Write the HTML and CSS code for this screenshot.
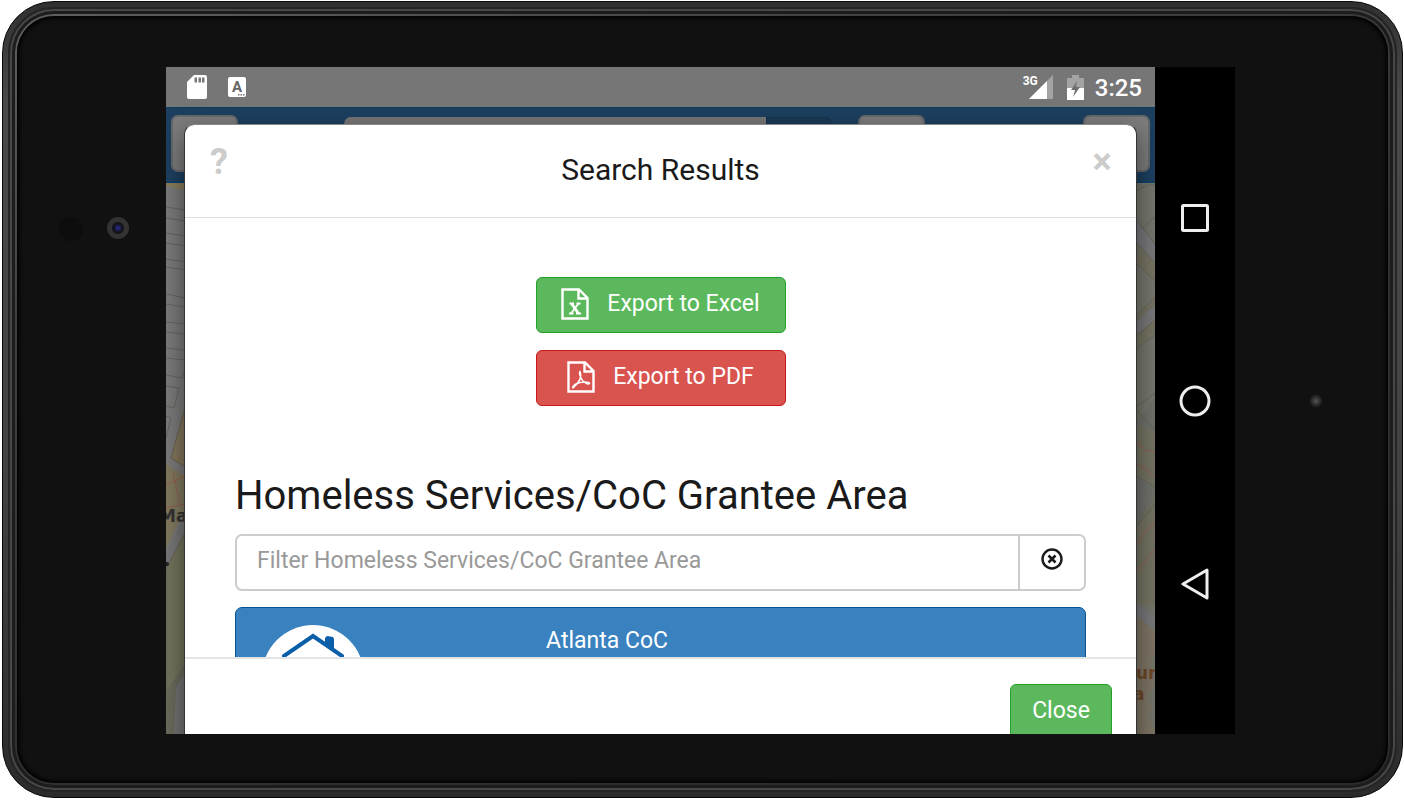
FILE: index.html
```html
<!DOCTYPE html>
<html lang="en">
<head>
  <meta charset="UTF-8" />
  <meta name="viewport" content="width=device-width, initial-scale=1.0"/>
  <title>Search Results</title>

  <link rel="stylesheet" href="styles.css">
</head>
<body>

  <div class="tablet">
    <div class="rim">
      <div class="glass">

        <div class="bezel">
          <span class="sensor"></span>
          <span class="camera"></span>
        </div>

        <div class="screen">
          <main class="app">

            <!-- Status bar -->
            <div class="status-bar">
              <svg class="sd-icon" width="20" height="24" viewBox="0 0 20 24">
                <path d="M7 0H18Q20 0 20 2V22Q20 24 18 24H2Q0 24 0 22V7Z" fill="#fff"/>
                <path d="M7.500 2.500h2.500v5h-2.500zM11.500 2.500h2.500v5h-2.500zM15 2.500h2.500v5h-2.500z" fill="#777"/>
              </svg>
              <svg class="a-icon" width="18" height="20" viewBox="0 0 18 20">
                <rect width="18" height="20" rx="2" fill="#fff"/>
                <text x="9" y="15" text-anchor="middle" class="a-text">A</text>
                <path d="M10 17h1.500v1.500H10zM12.500 17h1.500v1.500h-1.500zM15 17h1.500v1.500H15z" fill="#777"/>
              </svg>
              <span class="network">3G</span>
              <svg class="signal" width="24" height="24" viewBox="0 0 24 24">
                <path d="M24 0V24H0Z" fill="#a3a3a3"/>
                <path d="M18 6V24H0Z" fill="#fff"/>
              </svg>
              <svg class="battery" width="17" height="25" viewBox="0 0 17 25">
                <path d="M5 0h7v3h5v10H0V3h5z" fill="#a3a3a3"/>
                <path d="M0 13h17v12H0z" fill="#fff"/>
                <path d="M10 6L4 15h4l-2 7 7-10H9z" fill="#6f6f6f"/>
              </svg>
              <span class="clock">3:25</span>
            </div>

            <!-- Toolbar behind the dialog -->
            <div class="toolbar">
              <span class="tool"></span>
              <span class="tool-search"></span>
              <span class="tool-go"></span>
              <span class="tool tool-mid"></span>
              <span class="tool tool-last"></span>
            </div>

            <div class="map">
              <svg width="19" height="551" viewBox="0 0 19 551">
                <rect width="19" height="551" fill="#7b7b7b"/>
                <path d="M0 0H19V7L0 3Z" fill="#8b7e5e"/>
                <path d="M0 24l19 3M0 35l19 3M0 50l19 3M0 60l19 3M0 76l19 3M0 84l19 3M0 111l19 4M0 121l19 3M0 139l19 2M0 149l19 2M0 165l19 2M0 175l19 2M0 192l16 3 3-10M0 203l13 2-5 20-8-2M0 233l5 2-5 20" fill="none" stroke="#66665f"/>
                <path d="M19 225L5 275 19 284Z" fill="#84785c" stroke="#686150"/>
                <path d="M0 281L19 293V327L0 365Z" fill="#827a5f"/>
                <path d="M0 302l19-9M0 325l19-4M7 290l7 30" stroke="#93604f" fill="none"/>
                <path d="M0 369L19 332V372L0 405Z" fill="#777"/>
                <path d="M0 386L19 350V482L0 510Z" fill="#75745e" stroke="#66654f"/>
                <path d="M0 511L19 482V551H0Z" fill="#6c6b5c"/>
                <path d="M10 505L19 490V551H8Z" fill="#747474"/>
                <text x="-7" y="339" class="map-label dark">Ma</text>
                <circle cx="1" cy="381" r="2" fill="#222"/>
              </svg>
              <svg width="19" height="551" viewBox="0 0 19 551">
                <rect width="19" height="551" fill="#76776d"/>
                <path d="M0 8L11 2H19" stroke="#66665c" fill="none"/>
                <path d="M0 36L19 61V80L0 59Z" fill="#79787b"/>
                <path d="M0 59L19 80V98L0 80ZM0 133L19 114V122L0 139ZM0 153L19 137V148L0 166Z" fill="#777463"/>
                <path d="M0 139L19 122V137L0 153Z" fill="#79787a"/>
                <path d="M0 228L19 246V332L0 366ZM0 287L19 265V423L0 420Z" fill="#757463"/>
                <path d="M0 240L19 215V249ZM0 294V344L19 312V303Z" fill="#70726c"/>
                <path d="M0 36l19 25M0 59l19 21M0 80l19 18M6 46l13-12M0 133l19-19M0 153l19-16M0 166l19-14M0 224l19-14M0 226l19 21M0 293l19 11M0 344l19-23" stroke="#66665b" fill="none"/>
                <path d="M0 258l10 10h9M0 280l19 13M0 361l19-23M0 389l19-23" stroke="#925e51" fill="none"/>
                <path d="M0 420L19 433V448L0 433Z" fill="#79787b"/>
                <path d="M0 433L19 448V551H0Z" fill="#7e7565"/>
                <path d="M14 479l5-8v78l-7-15 4-8-4-12 6-12z" fill="#74766b"/>
                <text x="0" y="496" class="map-label">ur</text>
                <text x="-3" y="517" class="map-label">a</text>
              </svg>
            </div>

            <section class="modal" role="dialog" aria-labelledby="modalTitle">
              <header class="modal-header">
                <button type="button" class="icon-button help" aria-label="Help">?</button>
                <h4 id="modalTitle">Search Results</h4>
                <button type="button" class="icon-button dismiss" aria-label="Dismiss">×</button>
              </header>

              <div class="modal-body">
                <div class="exports">
                  <button type="button" class="btn btn-success">
                    <svg width="28" height="32" viewBox="0 0 28 32" fill="none" stroke="#fff" stroke-width="2.400">
                      <path d="M2.500 1.500H18L26.500 10V30.500H1.500V1.500ZM17.500 2V10.500H26"/>
                      <path d="M8.500 15.500h4.500M15.500 15.500h4M8 25.500h4.500M15 25.500h5" stroke-width="2"/>
                      <path d="M10.500 15.500L17.500 25.500" stroke-width="2.800"/>
                      <path d="M17.500 15.500L10 25.500" stroke-width="1.700"/>
                    </svg>
                    Export to Excel
                  </button>
                  <button type="button" class="btn btn-danger">
                    <svg width="28" height="32" viewBox="0 0 28 32" fill="none" stroke="#fff" stroke-width="2.400">
                      <path d="M2.500 1.500H18L26.500 10V30.500H1.500V1.500ZM17.500 2V10.500H26"/>
                      <path d="M13 10.500C15 15 14 20 6 27C5 27 6 24 10 22.500C14 21 19 20.500 22.500 22C23 24 17 23 14.500 18C12.500 14 12 11 13 10.500Z" stroke-width="1.500"/>
                    </svg>
                    Export to PDF
                  </button>
                </div>

                <h2>Homeless Services/CoC Grantee Area</h2>

                <div class="input-group">
                  <input type="text" id="filter" placeholder="Filter Homeless Services/CoC Grantee Area" aria-label="Filter Homeless Services/CoC Grantee Area">
                  <button type="button" class="clear" aria-label="Clear filter">
                    <svg width="22" height="22" viewBox="0 0 22 22" fill="none" stroke="#1a1a1a">
                      <circle cx="11" cy="11" r="9.500" stroke-width="2.400"/>
                      <path d="M7.500 7.500l7 7M14.500 7.500l-7 7" stroke-width="2.600"/>
                    </svg>
                  </button>
                </div>

                <a href="#" class="result">
                  <svg class="result-logo" width="102" height="102" viewBox="0 0 102 102">
                    <circle cx="51" cy="51" r="51" fill="#fff"/>
                    <path d="M63 13l2-2 6 1 1 2v12l-9-6z" fill="#0b5fa8"/>
                    <path d="M22 31L51 11L80 31" fill="none" stroke="#0b5fa8" stroke-width="4" stroke-linecap="round"/>
                  </svg>
                  <span class="result-name">Atlanta CoC</span>
                </a>
              </div>

              <footer class="modal-footer">
                <button type="button" class="btn btn-success btn-close">Close</button>
              </footer>
            </section>
          </main>

          <!-- Android navigation keys -->
          <nav class="nav-keys">
            <button type="button" aria-label="Recent apps">
              <svg width="32" height="32" viewBox="0 0 32 32"><rect x="3.500" y="3.500" width="25" height="25" rx="1"/></svg>
            </button>
            <button type="button" aria-label="Home">
              <svg width="32" height="32" viewBox="0 0 32 32"><circle cx="16" cy="16" r="14"/></svg>
            </button>
            <button type="button" aria-label="Back">
              <svg width="32" height="32" viewBox="0 0 32 32"><path d="M28 2V30L4 16Z"/></svg>
            </button>
          </nav>
        </div>

        <div class="bezel bezel-right">
          <span class="led"></span>
        </div>

      </div>
    </div>
  </div>

</body>
</html>
```
FILE: styles.css
```css
* {
  box-sizing: border-box;
}

body {
  margin: 0;
  height: 100vh;
  padding: 1px 1px 2px 2px;
  background: #fff;
  font-family: Roboto, "Liberation Sans", sans-serif;
  color: #1a1a1a;
}

button {
  font-family: inherit;
  cursor: pointer;
}

svg {
  display: block;
  flex-shrink: 0;
}

/* Device */
.tablet {
  height: 100%;
  padding: 5px;
  border: 1px solid #080808;
  border-radius: 52px;
  background: linear-gradient(to bottom, #303030, #484a49 12%, #414342 60%, #2b2b2b);
}

.rim {
  height: 100%;
  padding: 7px;
  border: 2px solid #252525;
  border-radius: 46px;
  background: linear-gradient(160deg, #606060, #404040 25%, #303030 60%, #2a2a2a);
  box-shadow: inset 0 0 0 2px #484848, inset 0 0 0 5px #1c1c1c;
}

.glass {
  height: 100%;
  padding: 51px 0 49px;
  display: grid;
  grid-template-columns: 149px 1fr 153px;
  border-radius: 37px;
  background: #111;
  box-shadow: inset 0 0 4px 2px #000;
}

.bezel {
  display: flex;
  align-items: flex-start;
  gap: 24px;
  padding: 150px 0 0 42px;
}

.sensor {
  width: 24px;
  height: 24px;
  border-radius: 50%;
  background: #0d0d0d;
}

.camera {
  width: 22px;
  height: 22px;
  border-radius: 50%;
  border: 5px solid #333;
  background: radial-gradient(#252a80 10%, #17172e 40%, #101010 70%);
}

.bezel-right {
  align-items: center;
  justify-content: center;
  padding: 0 0 0 8px;
}

.led {
  width: 14px;
  height: 14px;
  border-radius: 50%;
  background: radial-gradient(#555, #111 70%);
}

.screen {
  min-width: 0;
  min-height: 0;
  display: flex;
  overflow: hidden;
  background: #000;
}

.app {
  position: relative;
  flex: 1;
  display: flex;
  flex-direction: column;
  overflow: hidden;
}

/* Status bar */
.status-bar {
  height: 40px;
  flex-shrink: 0;
  display: flex;
  align-items: center;
  padding: 0 13px 0 21px;
  background: #767676;
  color: #fff;
}

.a-icon {
  margin-left: 21px;
}

.a-text {
  font: bold 15px Roboto, sans-serif;
  fill: #666;
}

.network {
  margin-left: auto;
  align-self: flex-start;
  padding-top: 7px;
  font-size: 12px;
  line-height: 14px;
  font-weight: bold;
}

.signal {
  margin-left: -9px;
}

.battery {
  margin: 0 11px 0 14px;
}

.clock {
  padding-top: 2px;
  font-size: 24px;
  line-height: 28px;
  font-weight: 500;
}

/* Toolbar */
.toolbar {
  height: 76px;
  flex-shrink: 0;
  display: flex;
  align-items: flex-start;
  padding: 7px 5px;
  background: #1d4060;
  border-top: 1px solid #113c61;
  border-bottom: 1px solid #063e70;
}

.tool {
  width: 67px;
  height: 57px;
  border: 2px solid #676a6c;
  border-radius: 7px;
  background: #7d7d7d;
}

.tool-search {
  width: 422px;
  height: 55px;
  margin: 2px 0 0 106px;
  border-radius: 7px 0 0 7px;
  background: #777;
}

.tool-go {
  width: 66px;
  height: 55px;
  margin-top: 2px;
  border: 1px solid #15334f;
  border-radius: 0 7px 7px 0;
  background: #1b3a57;
}

.tool-mid {
  margin-left: 26px;
}

.tool-last {
  margin-left: auto;
}

.map {
  flex: 1;
  display: flex;
  justify-content: space-between;
  background: #777;
}

.map-label {
  font: bold 17px "DejaVu Sans", sans-serif;
  fill: #6d4828;
}

.map-label.dark {
  fill: #333;
}

/* Dialog */
.modal {
  position: absolute;
  top: 57px;
  right: 18px;
  bottom: -24px;
  left: 18px;
  display: flex;
  flex-direction: column;
  border: 1px solid #333;
  border-top-color: #888;
  border-radius: 10px;
  background: #fff;
  background-clip: padding-box;
  box-shadow: 0 9px 26px rgba(0, 0, 0, 0.5);
}

.modal-header {
  height: 93px;
  flex-shrink: 0;
  display: flex;
  justify-content: space-between;
  align-items: flex-start;
  padding: 19px 24px;
  border-bottom: 1px solid #ddd;
}

.modal-header h4 {
  margin: 6px 0 0;
  font-size: 30px;
  line-height: 40px;
  font-weight: 400;
}

.icon-button {
  width: 20px;
  padding: 0;
  border: 0;
  background: none;
  color: #ccc;
  font-size: 36px;
  line-height: 36px;
  font-weight: bold;
}

.modal-body {
  flex: 1;
  min-height: 0;
  overflow: hidden;
  padding: 59px 50px 0;
}

.exports {
  display: flex;
  flex-direction: column;
  align-items: center;
  gap: 17px;
}

.btn {
  width: 250px;
  height: 56px;
  display: flex;
  align-items: center;
  justify-content: center;
  gap: 18px;
  padding: 0 0 2px;
  border: 1px solid;
  border-radius: 6px;
  color: #fff;
  font-size: 23px;
  line-height: 32px;
}

.btn-success {
  background: #5cb85c;
  border-color: #23a127;
}

.btn-danger {
  background: #d9534f;
  border-color: #c9171a;
}

h2 {
  margin: 66px 0 14px;
  font-size: 40px;
  line-height: 48px;
  font-weight: 400;
}

.input-group {
  display: flex;
  height: 57px;
  border: 2px solid #ccc;
  border-radius: 7px;
}

.input-group input {
  flex: 1;
  min-width: 0;
  padding: 0 20px 4px;
  border: 0;
  border-radius: 7px;
  background: #fff;
  font-family: inherit;
  font-size: 23px;
}

.input-group input::placeholder {
  color: #999;
}

.clear {
  width: 66px;
  display: flex;
  align-items: center;
  justify-content: center;
  padding: 0 0 8px;
  border: 0;
  border-left: 2px solid #ccc;
  background: none;
}

.result {
  display: grid;
  grid-template-columns: 102px 61% 1fr;
  height: 140px;
  margin-top: 16px;
  padding: 17px 26px;
  border: 1px solid #07518f;
  border-radius: 7px;
  background: #3a81bf;
  color: #fff;
  font-size: 23px;
  line-height: 32px;
  text-decoration: none;
}

.result-name {
  text-align: center;
}

.modal-footer {
  height: 100px;
  flex-shrink: 0;
  display: flex;
  justify-content: flex-end;
  padding: 25px 24px;
  border-top: 2px solid #e5e5e5;
}

.btn-close {
  width: 102px;
}

/* Navigation keys */
.nav-keys {
  width: 80px;
  display: flex;
  flex-direction: column;
  justify-content: space-around;
  align-items: center;
  padding: 59px 0;
  background: #000;
}

.nav-keys button {
  padding: 0;
  border: 0;
  background: none;
}

.nav-keys svg {
  fill: none;
  stroke: #eee;
  stroke-width: 3;
  stroke-linejoin: round;
}
```
